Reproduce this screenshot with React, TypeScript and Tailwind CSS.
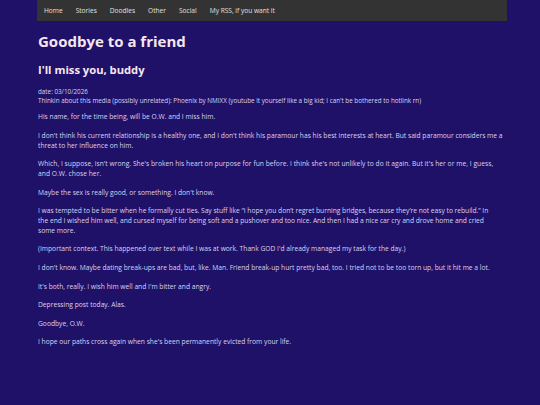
export default function App() {
  const paras: [string, string][] = [
    ["His name, for the time being, will be O.W. and I miss him.", ""],
    ["I don't think his current relationship is a healthy one, and I don't think his paramour has his best interests at heart. But said paramour considers me a threat to her influence on him.", ""],
    ["Which, I suppose, isn't wrong. She's broken his heart on purpose for fun before. I think she's not unlikely to do it again. But it's her or me, I guess, and O.W. chose her.", "tracking-[0.03px]"],
    ["Maybe the sex is really good, or something. I don't know.", ""],
    ["I was tempted to be bitter when he formally cut ties. Say stuff like \u201cI hope you don\u2019t regret burning bridges, because they\u2019re not easy to rebuild.\u201d In the end I wished him well, and cursed myself for being soft and a pushover and too nice. And then I had a nice car cry and drove home and cried some more.", "tracking-[-0.02px] pr-[8px]"],
    ["(Important context. This happened over text while I was at work. Thank GOD I'd already managed my task for the day.)", ""],
    ["I don't know. Maybe dating break-ups are bad, but, like. Man. Friend break-up hurt pretty bad, too. I tried not to be too torn up, but it hit me a lot.", ""],
    ["It's both, really. I wish him well and I'm bitter and angry.", ""],
    ["Depressing post today. Alas.", ""],
    ["Goodbye, O.W.", ""],
    ["I hope our paths cross again when she's been permanently evicted from your life.", ""],
  ];
  const nav = ["Home", "Stories", "Doodles", "Other", "Social", "My RSS, if you want it"];
  return (
    <div className="min-h-[405px] w-full bg-[#1f1068] text-[#dad4ee]" style={{ fontFamily: '"Open Sans", sans-serif' }}>
      <div className="ml-[37px] mr-[33px] flex h-[21px] items-center gap-[13px] bg-[#333333] pl-[7px] text-[6.6px] text-[#e0e0e0]">
        {nav.map((n) => (
          <span key={n}>{n}</span>
        ))}
      </div>
      <div className="ml-[38px] mr-[36px]">
        <h1 className="mt-[9px] text-[15px] font-bold leading-[22px] text-[#f6e6ee]">Goodbye to a friend</h1>
        <h2 className="mt-[10px] text-[11.2px] font-bold leading-[16px] text-[#f6e6ee]">I'll miss you, buddy</h2>
        <div className="mt-[9px] text-[6.3px] leading-[9.4px]">
          <div>date: 03/10/2026</div>
          <div>Thinkin about this media (possibly unrelated): Phoenix by NMIXX (youtube it yourself like a big kid; I can't be bothered to hotlink rn)</div>
        </div>
        <div className="text-[6.7px] leading-[9.8px]">
          {paras.map(([p, c], i) => (
            <p key={i} className={(i === 0 ? "mt-[6.5px] " : "mt-[8.8px] ") + c}>{p}</p>
          ))}
        </div>
      </div>
    </div>
  );
}
